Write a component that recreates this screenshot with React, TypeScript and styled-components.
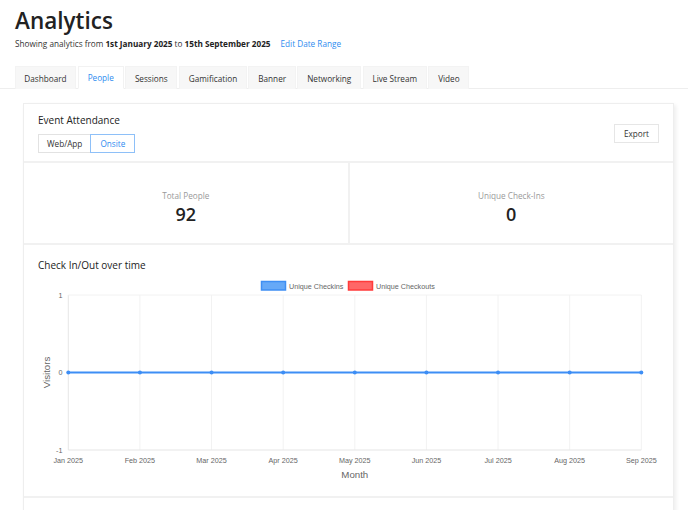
import React from "react";
import styled, { createGlobalStyle } from "styled-components";

const GlobalStyle = createGlobalStyle`
  html, body { margin: 0; padding: 0; background: #fff; }
  body { font-family: "Open Sans", "Noto Sans", sans-serif; color: #333; }
  * { box-sizing: border-box; }
`;

const Page = styled.div`
  width: 688px;
`;

const Header = styled.header`
  padding: 8.5px 15px 0;
`;

const Title = styled.h1`
  margin: 0;
  font-size: 22.5px;
  line-height: 24px;
  font-weight: 600;
  color: #222;
`;

const Subtitle = styled.p`
  margin: 5.5px 0 0;
  font-size: 8.2px;
  line-height: 12px;
  color: #333;
  b { font-weight: 700; color: #222; }
`;

const LinkText = styled.a`
  margin-left: 10px;
  color: #2f8cf0;
  text-decoration: none;
  cursor: pointer;
`;

const TabBar = styled.nav`
  display: flex;
  gap: 1.5px;
  margin-top: 16px;
  padding-left: 14.5px;
  border-bottom: 1px solid #eeeeee;
`;

const Tab = styled.div<{ $active?: boolean }>`
  height: 23px;
  display: flex;
  align-items: center;
  padding: 0 8.8px;
  font-size: 8.2px;
  color: ${(p) => (p.$active ? "#2f8cf0" : "#333")};
  background: ${(p) => (p.$active ? "#ffffff" : "#f7f7f7")};
  border: 1px solid ${(p) => (p.$active ? "#f2f2f2" : "#f3f3f3")};
  border-bottom: ${(p) => (p.$active ? "1px solid #fff" : "none")};
  margin-bottom: -1px;
`;

const Content = styled.main`
  padding: 14px 14px 40px 23px;
`;

const Card = styled.section`
  display: flex;
  flex-direction: column;
  gap: 2px;
  background: #f1f1f1;
  border: 1px solid #eeeeee;
  box-shadow: 2px 2px 4px rgba(0, 0, 0, 0.07);
`;

const Section = styled.div`
  background: #fff;
`;

const HeadSection = styled(Section)`
  display: flex;
  justify-content: space-between;
  align-items: center;
  padding: 8.5px 14px 8.5px;
`;

const HeadLeft = styled.div`
  display: flex;
  flex-direction: column;
  gap: 7px;
`;

const SectionTitle = styled.h2`
  margin: 0;
  font-size: 10px;
  line-height: 14px;
  font-weight: 500;
  color: #222;
`;

const ButtonGroup = styled.div`
  display: flex;
`;

const Button = styled.button<{ $active?: boolean }>`
  height: 19px;
  min-width: 45px;
  padding: 0 8px;
  font-family: "Open Sans", "Noto Sans", sans-serif;
  font-size: 8.2px;
  background: #fff;
  color: ${(p) => (p.$active ? "#2f8cf0" : "#333")};
  border: 1px solid ${(p) => (p.$active ? "#8ec0f8" : "#e2e2e2")};
  cursor: pointer;
  & + & { margin-left: -1px; }
`;

const ExportButton = styled(Button)`
  padding: 0 9px;
  border-color: #e6e6e6;
  margin-top: 2px;
`;

const StatsGrid = styled.div`
  display: grid;
  grid-template-columns: 1fr 1fr;
  gap: 2px;
`;

const StatCell = styled.div`
  background: #fff;
  display: flex;
  flex-direction: column;
  align-items: center;
  padding: 27px 0 18px;
`;

const StatLabel = styled.div`
  font-size: 8.2px;
  line-height: 12px;
  color: #9a9a9a;
`;

const StatValue = styled.div`
  margin-top: 1px;
  font-size: 18px;
  line-height: 22px;
  font-weight: 600;
  color: #222;
`;

const ChartSection = styled(Section)`
  padding: 13px 14px 9px;
`;

const ChartSvg = styled.svg`
  display: block;
  margin-top: 5px;
  width: 621px;
  height: 210px;
  font-family: "Liberation Sans", Arial, sans-serif;
`;

const NextSection = styled(Section)`
  height: 60px;
`;

const months = ["Jan", "Feb", "Mar", "Apr", "May", "Jun", "Jul", "Aug", "Sep"];

function CheckChart() {
  const left = 30.3;
  const right = 603.3;
  const top = 18;
  const bottom = 173;
  const zero = 95.5;
  const step = (right - left) / 8;
  const xs = months.map((_, i) => left + i * step);
  return (
    <ChartSvg viewBox="0 0 621 210">
      <rect x="223.5" y="4.5" width="24" height="8.5" fill="#66a9f7" stroke="#3f8ff3" strokeWidth="1.5" />
      <text x="251" y="12" fontSize="7.2" fill="#666">Unique Checkins</text>
      <rect x="310.5" y="4.5" width="24" height="8.5" fill="#ff6767" stroke="#ff3b3b" strokeWidth="1.5" />
      <text x="338" y="12" fontSize="7.2" fill="#666">Unique Checkouts</text>

      {xs.map((x, i) => (
        <line key={i} x1={x} y1={top} x2={x} y2={bottom} stroke={i === 0 ? "#e6e6e6" : "#f2f2f2"} strokeWidth="1" />
      ))}
      <line x1={left} y1={top} x2={right} y2={top} stroke="#f2f2f2" strokeWidth="1" />
      <line x1={left} y1={bottom} x2={right} y2={bottom} stroke="#e6e6e6" strokeWidth="1.2" />

      <text x="24.5" y="21" fontSize="7.2" fill="#666" textAnchor="end">1</text>
      <text x="24.5" y="98" fontSize="7.2" fill="#666" textAnchor="end">0</text>
      <text x="24.5" y="175.5" fontSize="7.2" fill="#666" textAnchor="end">-1</text>
      <text x="12" y={zero} fontSize="9.7" fill="#666" textAnchor="middle" transform={`rotate(-90 12 ${zero})`}>Visitors</text>

      <line x1={left} y1={zero} x2={right} y2={zero} stroke="#3d8ef5" strokeWidth="2.2" />
      {xs.map((x, i) => (
        <circle key={i} cx={x} cy={zero} r="2" fill="#3d8ef5" />
      ))}

      {xs.map((x, i) => (
        <text key={i} x={x} y="185.5" fontSize="7.2" fill="#666" textAnchor="middle">{`${months[i]} 2025`}</text>
      ))}
      <text x={(left + right) / 2} y="201" fontSize="9.7" fill="#666" textAnchor="middle">Month</text>
    </ChartSvg>
  );
}

export default function App() {
  const tabs = ["Dashboard", "People", "Sessions", "Gamification", "Banner", "Networking", "Live Stream", "Video"];
  return (
    <Page>
      <GlobalStyle />
      <Header>
        <Title>Analytics</Title>
        <Subtitle>
          Showing analytics from <b>1st January 2025</b> to <b>15th September 2025</b>
          <LinkText>Edit Date Range</LinkText>
        </Subtitle>
      </Header>
      <TabBar>
        {tabs.map((t) => (
          <Tab key={t} $active={t === "People"}>{t}</Tab>
        ))}
      </TabBar>
      <Content>
        <Card>
          <HeadSection>
            <HeadLeft>
              <SectionTitle>Event Attendance</SectionTitle>
              <ButtonGroup>
                <Button>Web/App</Button>
                <Button $active>Onsite</Button>
              </ButtonGroup>
            </HeadLeft>
            <ExportButton>Export</ExportButton>
          </HeadSection>
          <StatsGrid>
            <StatCell>
              <StatLabel>Total People</StatLabel>
              <StatValue>92</StatValue>
            </StatCell>
            <StatCell>
              <StatLabel>Unique Check-Ins</StatLabel>
              <StatValue>0</StatValue>
            </StatCell>
          </StatsGrid>
          <ChartSection>
            <SectionTitle>Check In/Out over time</SectionTitle>
            <CheckChart />
          </ChartSection>
          <NextSection />
        </Card>
      </Content>
    </Page>
  );
}
